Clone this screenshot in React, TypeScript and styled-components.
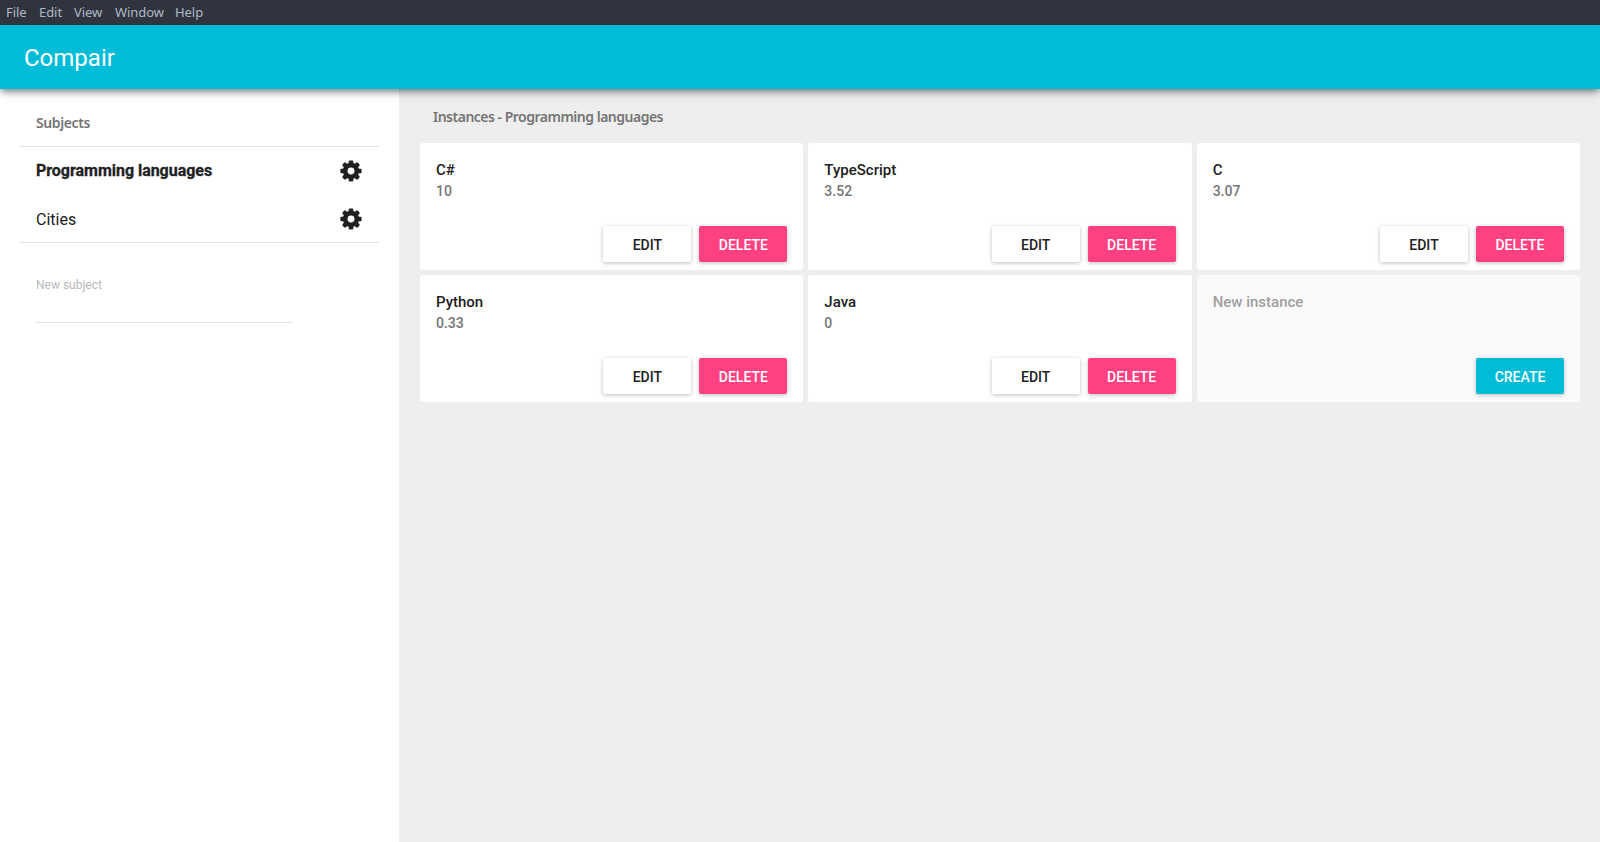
import React from 'react';
import styled, { createGlobalStyle } from 'styled-components';

const GlobalStyle = createGlobalStyle`
  * { box-sizing: border-box; }
  body { margin: 0; background: #eee; font-family: Roboto, sans-serif; }
`;

const ui = `'Noto Sans', 'Open Sans', sans-serif`;

const Page = styled.div`
  display: flex;
  flex-direction: column;
  height: 100vh;
  overflow: hidden;
`;

const MenuBar = styled.nav`
  position: relative;
  z-index: 2;
  display: flex;
  flex: none;
  gap: 12px;
  height: 25px;
  padding-left: 6px;
  background: #2f343f;
`;

const MenuItem = styled.span<{ $width: number }>`
  width: ${p => p.$width}px;
  font: 400 13px/25px ${ui};
  letter-spacing: -0.05px;
  white-space: nowrap;
  color: #afb8c5;
`;

const AppBar = styled.header`
  position: relative;
  z-index: 1;
  flex: none;
  height: 64px;
  padding-left: 24px;
  background: #00bcd7;
  color: #fff;
  font-size: 24px;
  line-height: 66px;
  box-shadow: 0 3px 6px -1px rgba(0, 0, 0, 0.3), 0 3px 10px -1px rgba(0, 0, 0, 0.35);
`;

const Body = styled.div`
  display: flex;
  flex: 1;
`;

const Sidebar = styled.aside`
  width: 399px;
  padding: 10px 20px 0;
  background: #fff;
`;

const SidebarTitle = styled.h2`
  margin: 0;
  padding-left: 16px;
  font: 600 14px/48px ${ui};
  letter-spacing: -0.4px;
  color: #757575;
`;

const SubjectList = styled.ul`
  margin: -1px 0 0;
  padding: 0;
  list-style: none;
  border: solid #e0e0e0;
  border-width: 1px 0;
`;

const Subject = styled.li<{ $active?: boolean }>`
  display: flex;
  align-items: center;
  justify-content: space-between;
  height: ${p => (p.$active ? 48 : 47)}px;
  padding: ${p => (p.$active ? '0 16px' : '1px 16px 0')};
  color: #212121;
  font-size: 16px;
`;

const SubjectName = styled.span<{ $active?: boolean }>`
  padding-bottom: ${p => (p.$active ? 1 : 0)}px;
  font-weight: ${p => (p.$active ? 700 : 400)};
  letter-spacing: ${p => (p.$active ? '-0.03px' : '0')};
  -webkit-text-stroke: ${p => (p.$active ? '0.3px #212121' : '0')};
`;

const Gear = styled.svg`
  display: block;
  width: 24px;
  height: 24px;
  fill: #212121;
`;

const NewSubject = styled.label`
  display: block;
  width: 256px;
  height: 48px;
  margin: 32px 0 0 16px;
  border-bottom: 1px solid #e0e0e0;
  color: #b8b8b8;
  font-size: 12px;
  line-height: 20px;
`;

const Main = styled.main`
  flex: 1;
  padding: 4px 20px 0 21px;
`;

const MainTitle = styled.h2`
  margin: 0;
  padding-left: 13px;
  font: 600 14px/48px ${ui};
  letter-spacing: -0.5px;
  color: #757575;
`;

const Grid = styled.div`
  display: grid;
  grid-template-columns: repeat(3, 1fr);
  grid-auto-rows: 127px;
  gap: 5px;
  margin-top: 2px;
`;

const Card = styled.section<{ $muted?: boolean }>`
  display: flex;
  flex-direction: column;
  justify-content: space-between;
  padding: 16px 16px 8px;
  border-radius: 3px;
  background: ${p => (p.$muted ? '#fafafa' : '#fff')};
`;

const CardTitle = styled.div<{ $muted?: boolean }>`
  font-size: 15px;
  font-weight: 500;
  line-height: 22px;
  color: ${p => (p.$muted ? '#a0a0a0' : '#212121')};
`;

const CardValue = styled.div`
  font-size: 14px;
  font-weight: 500;
  line-height: 20px;
  color: #757575;
`;

const Actions = styled.div`
  display: flex;
  justify-content: flex-end;
  gap: 8px;
`;

const tones = {
  plain: ['#fff', '#212121'],
  danger: ['#ff4081', '#fff'],
  primary: ['#00bcd7', '#fff'],
};

const Button = styled.button<{ $tone: keyof typeof tones }>`
  width: 88px;
  height: 36px;
  padding: 1px 0 0;
  border: 0;
  border-radius: 2px;
  background: ${p => tones[p.$tone][0]};
  color: ${p => tones[p.$tone][1]};
  font: 500 14px/36px Roboto, sans-serif;
  box-shadow: 0 1px 4px rgba(0, 0, 0, 0.26);
`;

const menu: [string, number][] = [['File', 21], ['Edit', 23], ['View', 29], ['Window', 48], ['Help', 28]];
const subjects = [{ name: 'Programming languages', active: true }, { name: 'Cities', active: false }];
const instances = [
  { name: 'C#', value: '10' },
  { name: 'TypeScript', value: '3.52' },
  { name: 'C', value: '3.07' },
  { name: 'Python', value: '0.33' },
  { name: 'Java', value: '0' },
];

const GearIcon = () => (
  <Gear viewBox="-12 -12 24 24">
    <circle r="5.8" fill="none" stroke="#212121" strokeWidth="4.7" />
    {[0, 90, 180, 270].map(a => (
      <rect key={a} x="-2.3" y="-10.6" width="4.6" height="5" rx="1" transform={`rotate(${a})`} />
    ))}
    {[45, 135, 225, 315].map(a => (
      <rect key={a} x="-2.3" y="-10.7" width="4.6" height="5" rx="1.3" transform={`rotate(${a})`} />
    ))}
  </Gear>
);

export default function App() {
  return (
    <Page>
      <GlobalStyle />
      <MenuBar>
        {menu.map(([name, width]) => <MenuItem key={name} $width={width}>{name}</MenuItem>)}
      </MenuBar>
      <AppBar>Compair</AppBar>
      <Body>
        <Sidebar>
          <SidebarTitle>Subjects</SidebarTitle>
          <SubjectList>
            {subjects.map(s => (
              <Subject key={s.name} $active={s.active}>
                <SubjectName $active={s.active}>{s.name}</SubjectName>
                <GearIcon />
              </Subject>
            ))}
          </SubjectList>
          <NewSubject>New subject</NewSubject>
        </Sidebar>
        <Main>
          <MainTitle>Instances - Programming languages</MainTitle>
          <Grid>
            {instances.map(i => (
              <Card key={i.name}>
                <div>
                  <CardTitle>{i.name}</CardTitle>
                  <CardValue>{i.value}</CardValue>
                </div>
                <Actions>
                  <Button $tone="plain">EDIT</Button>
                  <Button $tone="danger">DELETE</Button>
                </Actions>
              </Card>
            ))}
            <Card $muted>
              <CardTitle $muted>New instance</CardTitle>
              <Actions>
                <Button $tone="primary">CREATE</Button>
              </Actions>
            </Card>
          </Grid>
        </Main>
      </Body>
    </Page>
  );
}
